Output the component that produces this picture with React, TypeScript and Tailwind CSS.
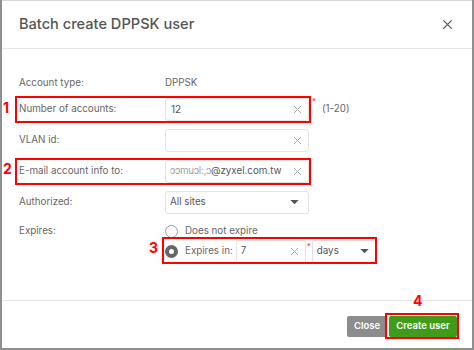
import React from "react";

function XIcon({ className = "" }: { className?: string }) {
  return (
    <svg viewBox="0 0 10 10" className={className} fill="none" stroke="currentColor" strokeWidth="1.1" strokeLinecap="round">
      <path d="M1.5 1.5 L8.5 8.5 M8.5 1.5 L1.5 8.5" />
    </svg>
  );
}

function Caret() {
  return (
    <svg viewBox="0 0 10 6" className="w-[9px] h-[5px] text-[#555]" fill="currentColor">
      <path d="M0 0 H10 L5 5 Z" />
    </svg>
  );
}

function TextInput({ value = "" }: { value?: string }) {
  return (
    <div className="w-[144px] h-[23px] border border-[#e3e3e3] rounded-[3px] flex items-center pl-[5px] pr-[6px] bg-white">
      <span className="flex-1 text-[10px] text-[#555] truncate">{value}</span>
      <XIcon className="w-[9px] h-[9px] text-[#a8a8a8]" />
    </div>
  );
}

function Label({ children }: { children: React.ReactNode }) {
  return <div className="w-[146px] shrink-0 text-[9.8px] text-[#666]">{children}</div>;
}

export default function App() {
  return (
    <div
      className="relative w-[474px] h-[350px] bg-[#8f8f8f] overflow-hidden pl-[2px] pr-[2px] pb-[2px]"
      style={{ fontFamily: "Inter, 'Liberation Sans', sans-serif" }}
    >
      <div className="w-[470px] h-[348px] bg-white border-t border-[#d8d8d8] flex flex-col">
        <div className="h-[48px] border-b border-[#e6e6e6] flex items-center justify-between pl-[17px] pr-[19px]">
          <div className="text-[14.6px] text-[#555] font-medium">Batch create DPPSK user</div>
          <XIcon className="w-[11px] h-[11px] text-[#555]" />
        </div>

        <div className="flex-1 flex flex-col pl-[17px] pt-[23px]">
          <div className="h-[23px] flex items-center">
            <Label>Account type:</Label>
            <div className="text-[9.8px] text-[#666]">DPPSK</div>
          </div>
          <div className="h-[23px] flex items-center mt-[3px]">
            <Label>Number of accounts:</Label>
            <TextInput value="12" />
            <div className="ml-[13px] text-[9.8px] text-[#666]">(1-20)</div>
          </div>
          <div className="h-[23px] flex items-center mt-[8px]">
            <Label>VLAN id:</Label>
            <TextInput />
          </div>
          <div className="h-[23px] flex items-center mt-[8px]">
            <Label>E-mail account info to:</Label>
            <div className="w-[144px] h-[23px] border border-[#e3e3e3] rounded-[3px] flex items-center pl-[4px] pr-[6px]">
              <span className="flex-1 text-[9.8px] text-[#555] truncate">
                <span className="text-[#a0a0a0] tracking-[-0.3px]">ɔɔmuɔl:,ɔ</span>@zyxel.com.tw
              </span>
              <XIcon className="w-[9px] h-[9px] text-[#a8a8a8]" />
            </div>
          </div>
          <div className="h-[23px] flex items-center mt-[8px]">
            <Label>Authorized:</Label>
            <div className="w-[144px] h-[23px] border border-[#e3e3e3] rounded-[3px] flex items-center pl-[4px] pr-[9px] justify-between">
              <span className="text-[9.8px] text-[#555]">All sites</span>
              <Caret />
            </div>
          </div>
          <div className="flex mt-[9px]">
            <div className="pt-[1px]">
              <Label>Expires:</Label>
            </div>
            <div className="flex flex-col">
              <div className="h-[16px] flex items-center">
                <div className="w-[13px] h-[13px] rounded-full border border-[#9a9a9a] bg-white" />
                <span className="ml-[7px] text-[9.8px] text-[#666]">Does not expire</span>
              </div>
              <div className="h-[23px] flex items-center mt-[1px]">
                <div className="w-[13px] h-[13px] rounded-full bg-[#666] flex items-center justify-center">
                  <div className="w-[5px] h-[5px] rounded-full bg-white" />
                </div>
                <span className="ml-[7px] text-[9.8px] text-[#666]">Expires in:</span>
                <div className="ml-[3px] w-[70px] h-[23px] border border-[#e3e3e3] rounded-[2px] flex items-center pl-[4px] pr-[6px]">
                  <span className="flex-1 text-[9.8px] text-[#555]">7</span>
                  <XIcon className="w-[9px] h-[9px] text-[#a8a8a8]" />
                </div>
                <div className="w-[6px] self-start text-[8px] text-[#e33] leading-none pt-[2px] pl-[1px]">*</div>
                <div className="w-[64px] h-[23px] border border-[#e3e3e3] rounded-[2px] flex items-center pl-[4px] pr-[6px] justify-between">
                  <span className="text-[9.8px] text-[#555]">days</span>
                  <Caret />
                </div>
              </div>
            </div>
          </div>
        </div>

        <div className="h-[48px] border-t border-[#e6e6e6] flex items-start justify-end pt-[15px] pr-[15px] gap-[2px]">
          <div className="w-[40px] h-[21px] bg-[#8c8c8c] rounded-[2px] flex items-center justify-center text-[9.5px] font-semibold text-white">
            Close
          </div>
          <div className="w-[68px] h-[21px] bg-[#3e9c18] rounded-[2px] flex items-center justify-center text-[9.5px] font-semibold text-white">
            Create user
          </div>
        </div>
      </div>

      {/* annotations */}
      <div className="absolute left-[312px] top-[97px] text-[8px] text-[#e33] leading-none">*</div>
      <div className="absolute left-[15px] top-[96px] w-[296px] h-[27px] border-2 border-[#ff0000]" />
      <div className="absolute left-[15px] top-[158px] w-[296px] h-[27px] border-2 border-[#ff0000]" />
      <div className="absolute left-[162px] top-[237px] w-[215px] h-[27px] border-2 border-[#ff0000]" />
      <div className="absolute left-[385px] top-[313px] w-[74px] h-[26px] border-2 border-[#ff0000]" />
      <div className="absolute left-[3px] top-[101px] text-[14px] font-bold text-[#ff0000] leading-none">1</div>
      <div className="absolute left-[3px] top-[162px] text-[14px] font-bold text-[#ff0000] leading-none">2</div>
      <div className="absolute left-[149px] top-[241px] text-[14px] font-bold text-[#ff0000] leading-none">3</div>
      <div className="absolute left-[413px] top-[294px] text-[14px] font-bold text-[#ff0000] leading-none">4</div>
    </div>
  );
}
